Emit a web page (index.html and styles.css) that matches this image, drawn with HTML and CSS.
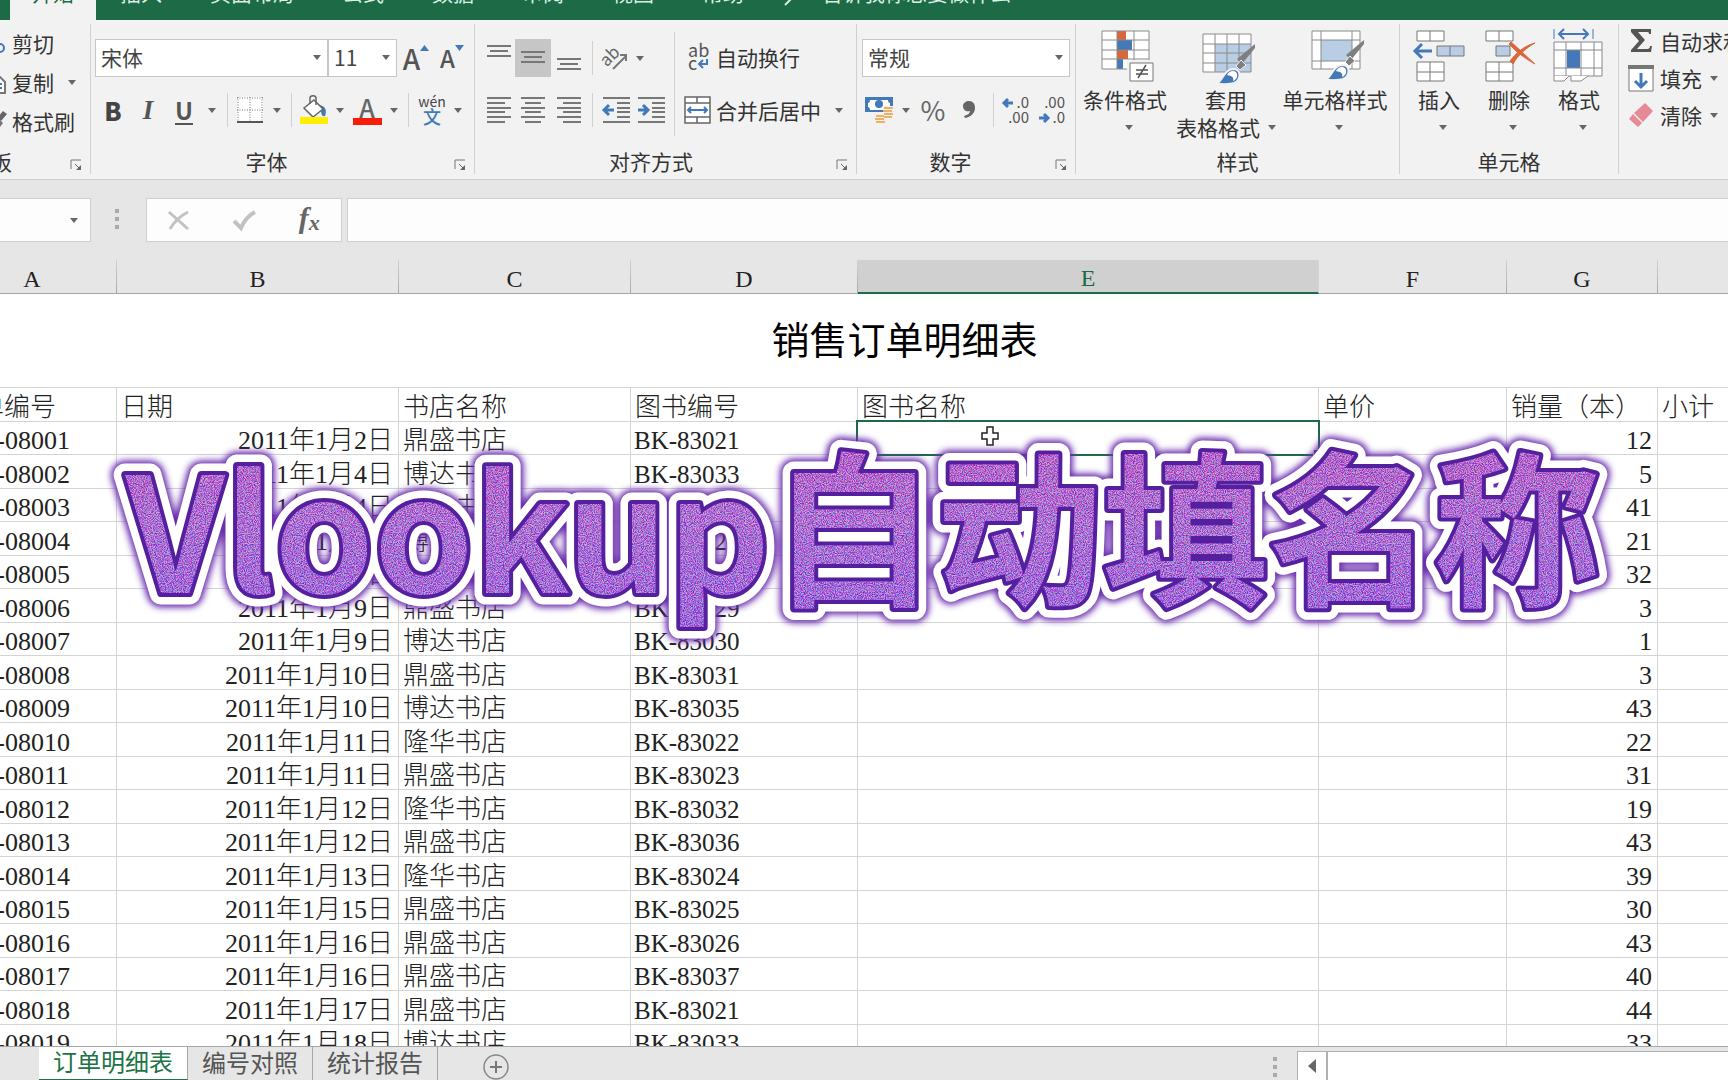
FILE: index.html
```html
<!DOCTYPE html>
<html lang="zh-CN">
<head>
<meta charset="utf-8">
<title>销售订单明细表</title>
<link rel="stylesheet" href="styles.css">
</head>
<body>
<svg class="defs" aria-hidden="true">
  <defs>
    <g id="brush">
      <path d="M50 15 L37 31 L32 26 L50 11 Z" fill="#7f7f7f"/>
      <path d="M36 27 l-5 6 4 4 6-5z" fill="#7f7f7f" stroke="#f2f2f2"/>
      <path d="M11 51 C18 49 18 37 28 36 C37 36 36 47 29 50 C24 52 17 51 11 51 Z" fill="#4379b8" stroke="#f2f2f2" stroke-width="2"/>
      <path d="M22 42 C24 38 28 37 31 39 C34 43 31 47 28 48 C29 44 27 43 22 42 Z" fill="#fff"/>
    </g>
    <linearGradient id="bannerFill" x1="0" y1="0" x2="0" y2="1">
      <stop offset="0" stop-color="#c63fc0"/>
      <stop offset="0.5" stop-color="#ac62d8"/>
      <stop offset="1" stop-color="#8f50ea"/>
    </linearGradient>
    <filter id="glitter" x="0" y="0" width="1" height="1" color-interpolation-filters="sRGB">
      <feTurbulence type="fractalNoise" baseFrequency="0.9" numOctaves="2" seed="4" result="n"/>
      <feColorMatrix in="n" type="matrix" values="3 0 0 0 -0.8  0 3.4 0 0 -1.2  0 0 1.6 0 0  0 0 0 0 0.48" result="c"/>
      <feComposite in="c" in2="SourceGraphic" operator="in" result="g"/>
      <feMerge><feMergeNode in="SourceGraphic"/><feMergeNode in="g"/></feMerge>
    </filter>
    <filter id="halo" x="-0.1" y="-0.2" width="1.2" height="1.4"><feGaussianBlur stdDeviation="3"/></filter>
  </defs>
</svg>

<nav class="tabs">
  <button class="tab tab-on">开始</button>
  <button class="tab">插入</button>
  <button class="tab">页面布局</button>
  <button class="tab">公式</button>
  <button class="tab">数据</button>
  <button class="tab">审阅</button>
  <button class="tab">视图</button>
  <button class="tab">帮助</button>
  <button class="tab tell"><svg width="12" height="30" viewBox="0 0 12 30"><path d="M10 21 L3 28" stroke="#d8efe2" stroke-width="2" fill="none"/></svg>告诉我你想要做什么</button>
</nav>

<header class="ribbon">
  <section class="group clipboard">
    <div class="stack">
      <button class="line"><svg width="20" height="24" viewBox="0 0 20 24"><circle cx="13" cy="17" r="4" fill="none" stroke="#4379b8" stroke-width="2"/><path d="M12 14 L6 3" stroke="#666" stroke-width="2"/></svg>剪切</button>
      <button class="line"><svg width="20" height="24" viewBox="0 0 20 24"><path d="M6 7 h7 l5 5 v11 H6z" fill="#fff" stroke="#777" stroke-width="2"/><path d="M9 14h6M9 18h6" stroke="#4379b8" stroke-width="2"/></svg>复制<i class="dd"></i></button>
      <button class="line"><svg width="20" height="24" viewBox="0 0 20 24"><path d="M10 9 L16 2 L20 5 L14 12z" fill="#666"/><path d="M10 8 l6 6-3 4-6-5z" fill="#777"/></svg>格式刷</button>
    </div>
    <footer class="caption">剪贴板<svg class="launch" viewBox="0 0 12 12"><path d="M1 10V1h10" fill="none" stroke="#777"/><path d="M5 5l5 5" stroke="#666"/><path d="M11 6v5H6z" fill="#666"/></svg></footer>
  </section>

  <section class="group font">
    <div class="tools row-a">
      <label class="combo"><select aria-label="字体"><option>宋体</option></select></label>
      <label class="combo"><select aria-label="字号"><option>11</option></select></label>
      <button class="grow" aria-label="增大字号"><span>A</span><svg width="9" height="6" viewBox="0 0 9 6"><path d="M0 6h9L4.500 0z" fill="#4379b8"/></svg></button>
      <button class="shrink" aria-label="减小字号"><span>A</span><svg width="9" height="6" viewBox="0 0 9 6"><path d="M0 0h9L4.500 6z" fill="#4379b8"/></svg></button>
    </div>
    <div class="tools row-b">
      <button class="bold">B</button>
      <button class="italic">I</button>
      <button class="under">U</button><i class="dd"></i>
      <i class="sep"></i>
      <button aria-label="边框"><svg width="26" height="26" viewBox="0 0 26 26"><path d="M0 0h26v26H0z" fill="#fff"/><path d="M1 0V24M25 0V24M13 0V24M0 1H26M0 13H26" stroke="#777" stroke-dasharray="1 1.500" fill="none"/><path d="M0 25H26" stroke="#555" stroke-width="2"/></svg></button><i class="dd"></i>
      <i class="sep"></i>
      <button aria-label="填充颜色"><svg width="30" height="30" viewBox="0 0 30 30"><path d="M20 10 C27 11 28 16 26 21 C23 22 22 19 22 14z" fill="#4379b8"/><path d="M15 5 L24 14 L14 22 L5 13 Z" fill="#fff" stroke="#666" stroke-width="1.500"/><path d="M11 9V3c0-3 6-3 6 0v7" fill="none" stroke="#666" stroke-width="1.500"/><path d="M1 22h28v7H1z" fill="#ffee00"/></svg></button><i class="dd"></i>
      <button class="ink" aria-label="字体颜色"><span>A</span></button><i class="dd"></i>
      <i class="sep"></i>
      <button class="pinyin"><span>wén</span><b>文</b></button><i class="dd"></i>
    </div>
    <footer class="caption">字体<svg class="launch" viewBox="0 0 12 12"><path d="M1 10V1h10" fill="none" stroke="#777"/><path d="M5 5l5 5" stroke="#666"/><path d="M11 6v5H6z" fill="#666"/></svg></footer>
  </section>

  <section class="group align">
    <div class="split">
      <div class="half">
        <div class="tools row-a">
          <button aria-label="顶端对齐"><svg class="bars" viewBox="0 0 24 26"><path d="M0 1h24M3 6h18M0 11h24"/></svg></button>
          <button class="pressed" aria-label="垂直居中"><svg class="bars" viewBox="0 0 24 26"><path d="M0 7h24M3 12h18M0 17h24"/></svg></button>
          <button aria-label="底端对齐"><svg class="bars" viewBox="0 0 24 26"><path d="M0 14h24M3 19h18M0 24h24"/></svg></button>
          <i class="sep"></i>
          <button aria-label="方向"><svg width="26" height="26" viewBox="0 0 26 26"><text x="-1" y="17" class="orient" transform="rotate(-45 8 14)">ab</text><path d="M10 24 L23 11M17 10h6v6" fill="none" stroke="#777" stroke-width="2"/></svg></button><i class="dd"></i>
        </div>
        <div class="tools row-b">
          <button aria-label="左对齐"><svg class="bars" viewBox="0 0 24 26"><path d="M0 1h24M0 6h18M0 11h24M0 15h18M0 20h24M0 25h18"/></svg></button>
          <button aria-label="居中"><svg class="bars" viewBox="0 0 24 26"><path d="M0 1h24M4 6h16M0 11h24M4 15h16M0 20h24M4 25h16"/></svg></button>
          <button aria-label="右对齐"><svg class="bars" viewBox="0 0 24 26"><path d="M0 1h24M6 6h18M0 11h24M6 15h18M0 20h24M6 25h18"/></svg></button>
          <i class="sep"></i>
          <button aria-label="减少缩进"><svg class="bars wide" viewBox="0 0 27 26"><path d="M0 1h27M14 6h13M14 11h13M14 15h13M14 20h13M0 25h27"/><path class="arrow" d="M11 13H2M6 8l-5 5 5 5"/></svg></button>
          <button aria-label="增加缩进"><svg class="bars wide" viewBox="0 0 27 26"><path d="M0 1h27M14 6h13M14 11h13M14 15h13M14 20h13M0 25h27"/><path class="arrow" d="M0 13h9M5 8l5 5-5 5"/></svg></button>
        </div>
      </div>
      <div class="wraps">
        <button class="line wrap"><svg width="27" height="28" viewBox="0 0 27 28"><text x="4" y="14" class="abc">ab</text><text x="4" y="27" class="abc">c</text><path d="M23 16v5h-7M19 17l-4 4 4 4" fill="none" stroke="#4379b8" stroke-width="2"/></svg>自动换行</button>
        <button class="line merge"><svg width="27" height="28" viewBox="0 0 27 28"><path d="M1 1h25v26H1zM1 7h25M1 21h25M13 1v6M13 21v6" fill="#fff" stroke="#666" stroke-width="1.500"/><path d="M4 14h19M7 11l-3 3 3 3M20 11l3 3-3 3" fill="none" stroke="#4379b8" stroke-width="2"/></svg>合并后居中<i class="dd"></i></button>
      </div>
    </div>
    <footer class="caption">对齐方式<svg class="launch" viewBox="0 0 12 12"><path d="M1 10V1h10" fill="none" stroke="#777"/><path d="M5 5l5 5" stroke="#666"/><path d="M11 6v5H6z" fill="#666"/></svg></footer>
  </section>

  <section class="group number">
    <div class="tools row-a">
      <label class="combo"><select aria-label="数字格式"><option>常规</option></select></label>
    </div>
    <div class="tools row-b">
      <button aria-label="会计数字格式"><svg width="28" height="28" viewBox="0 0 28 28"><path d="M0 1h28v15H0z" fill="#4379b8"/><path d="M5 4h18c0 2 1 3 2 3v4c-1 0-2 1-2 3H5c0-2-1-3-2-3V7c1 0 2-1 2-3z" fill="#fff"/><circle cx="14" cy="8" r="4" fill="#4379b8"/><path d="M18 10h10v12h-8v6H10v-9h8z" fill="#f2f2f2"/><path d="M19 12h9M18 15h9M19 18h9M19 21h8M11 20h8M10 23h9M11 26h9" stroke="#f0b064" stroke-width="2"/></svg></button><i class="dd"></i>
      <button class="percent">%</button>
      <button aria-label="千位分隔样式"><svg width="12" height="18" viewBox="0 0 12 18"><path d="M6 0c4 0 6 3 6 7 0 5-4 9-10 10l-1-2c4-1 6-3 6-5-4 1-7-1-7-5 0-3 3-5 6-5z" fill="#666"/></svg></button>
      <i class="sep"></i>
      <button aria-label="增加小数位数"><svg width="28" height="28" viewBox="0 0 28 28"><text x="27" y="12" text-anchor="end" class="dec">.0</text><text x="27" y="27" text-anchor="end" class="dec">.00</text><path d="M11 7H3M6 3L2 7l4 4" fill="none" stroke="#4379b8" stroke-width="3"/></svg></button>
      <button aria-label="减少小数位数"><svg width="28" height="28" viewBox="0 0 28 28"><text x="27" y="12" text-anchor="end" class="dec">.00</text><text x="27" y="27" text-anchor="end" class="dec">.0</text><path d="M1 22h8M6 18l4 4-4 4" fill="none" stroke="#4379b8" stroke-width="3"/></svg></button>
    </div>
    <footer class="caption">数字<svg class="launch" viewBox="0 0 12 12"><path d="M1 10V1h10" fill="none" stroke="#777"/><path d="M5 5l5 5" stroke="#666"/><path d="M11 6v5H6z" fill="#666"/></svg></footer>
  </section>

  <section class="group styles">
    <div class="bigs">
      <button class="big"><svg width="54" height="56" viewBox="0 0 54 56"><path d="M4 3h47v38H4z" fill="#fff"/><path d="M19 3h9v9h-9zM19 22h11v9H19z" fill="#d9673c"/><path d="M19 12h15v10H19zM19 31h6v10h-6z" fill="#4379b8"/><path d="M4 3h47v38H4zM4 12h47M4 22h47M4 31h47M19 3v38M36 3v38" fill="none" stroke="#8a8a8a"/><path d="M29 32h28v22H29z" fill="#f2f2f2"/><path d="M32 35h23v18H32z" fill="#fff" stroke="#777"/><path d="M38 42h12M38 46h12M48 37l-8 13" stroke="#555" stroke-width="1.500"/></svg><span>条件格式</span><i class="dd"></i></button>
      <button class="big"><svg width="54" height="56" viewBox="0 0 54 56"><path d="M4 6h48v38H4z" fill="#fff"/><path d="M16 16h36v28H16z" fill="#b9cde5"/><path d="M4 6h48v38H4zM4 16h48M4 25h48M4 35h48M16 6v38M28 6v38M40 6v38" fill="none" stroke="#8a8a8a"/><use href="#brush" x="6" y="5"/></svg><span>套用</span><span class="tail">表格格式<i class="dd"></i></span></button>
      <button class="big"><svg width="54" height="56" viewBox="0 0 54 56"><path d="M4 3h48v38H4z" fill="#fff" stroke="#8a8a8a"/><path d="M13 12h31v21H13z" fill="#b9cde5"/><path d="M4 12h48M4 33h48M13 3v38M44 3v38" fill="none" stroke="#8a8a8a"/><use href="#brush" x="6" y="1"/></svg><span>单元格样式</span><i class="dd"></i></button>
    </div>
    <footer class="caption">样式</footer>
  </section>

  <section class="group cells">
    <div class="bigs">
      <button class="big"><svg width="54" height="56" viewBox="0 0 54 56"><path d="M5 3h27v10H5zM18 3v10M5 34h27v19H5zM18 34v19M5 44h27" fill="#fff" stroke="#777"/><path d="M25 18h27v10H25zM38 18v10" fill="#b9cde5" stroke="#777"/><path d="M20 23H4M10 16l-7 7 7 7" fill="none" stroke="#4379b8" stroke-width="3"/></svg><span>插入</span><i class="dd"></i></button>
      <button class="big"><svg width="54" height="56" viewBox="0 0 54 56"><path d="M4 3h27v10H4zM17 3v10M4 34h27v19H4zM17 34v19M4 44h27" fill="#fff" stroke="#777"/><path d="M14 18h14v10H14z" fill="#b9cde5" stroke="#777"/><path d="M29 14 C36 20 44 28 53 36 C44 31 34 24 27 16z" fill="#d9673c" stroke="#d9673c"/><path d="M53 15 C44 20 36 27 31 36 L28 33 C34 25 42 18 53 15z" fill="#d9673c" stroke="#d9673c"/></svg><span>删除</span><i class="dd"></i></button>
      <button class="big"><svg width="54" height="56" viewBox="0 0 54 56"><path d="M2 1v10M41 1v10" stroke="#4379b8"/><path d="M7 6h29M12 1L7 6l5 5M31 1l5 5-5 5" fill="none" stroke="#4379b8" stroke-width="2"/><path d="M2 14h48v34H2z" fill="#fff"/><path d="M15 22h13v18H15z" fill="#4379b8"/><path d="M2 14h48v34H2zM2 22h48M2 40h48M14 14v34M29 14v34M42 14v34" fill="none" stroke="#888"/><path d="M2 48v5h10l5-5M19 48v5h10l7-5" fill="#fff" stroke="#888"/></svg><span>格式</span><i class="dd"></i></button>
    </div>
    <footer class="caption">单元格</footer>
  </section>

  <section class="group edit">
    <div class="stack">
      <button class="line"><svg width="28" height="28" viewBox="0 0 28 28"><path d="M4 2h20v5h-2c0-2-1-2-3-2h-8l7 8-8 9h10c2 0 3-1 3-3h2l-1 6H4v-2l8-9-8-9z" fill="#555"/></svg>自动求和</button>
      <button class="line"><svg width="28" height="28" viewBox="0 0 28 28"><path d="M2 2h24v25H2z" fill="#fff" stroke="#777"/><path d="M1 1h26v4H1z" fill="#777"/><path d="M14 9v14M8 17l6 6 6-6" fill="none" stroke="#4379b8" stroke-width="3"/></svg>填充<i class="dd"></i></button>
      <button class="line"><svg width="28" height="28" viewBox="0 0 28 28"><path d="M18 2l8 8-10 11-9-9z" fill="#e68a96"/><path d="M6 13l9 9-4 4-9-8z" fill="#e68a96"/></svg>清除<i class="dd"></i></button>
    </div>
  </section>
</header>

<div class="formula">
  <label class="namebox"><input type="text" aria-label="名称框"><i class="dd"></i></label>
  <i class="grip"></i>
  <div class="fxbox">
    <button aria-label="取消"><svg width="22" height="20" viewBox="0 0 22 20"><path d="M1 2L20 19M20 2C12 6 6 12 2 19" fill="none" stroke="#c2c2c2" stroke-width="3"/></svg></button>
    <button aria-label="输入"><svg width="24" height="20" viewBox="0 0 24 20"><path d="M2 11l7 7C12 11 17 5 23 2" fill="none" stroke="#c2c2c2" stroke-width="4"/></svg></button>
    <button class="fx">f<sub>x</sub></button>
  </div>
  <input class="fxinput" type="text" aria-label="编辑栏">
</div>

<main class="sheet">
  <table class="grid">
    <colgroup><col class="ca"><col class="cb"><col class="cc"><col class="cd"><col class="ce"><col class="cf"><col class="cg"><col class="ch"></colgroup>
    <thead>
      <tr class="letters"><th>A</th><th>B</th><th>C</th><th>D</th><th class="on">E</th><th>F</th><th>G</th><th>H</th></tr>
    </thead>
    <tbody id="rows">
      <tr class="title"><td colspan="8">销售订单明细表</td></tr>
      <tr class="heads"><td>订单编号</td><td>日期</td><td>书店名称</td><td>图书编号</td><td>图书名称</td><td>单价</td><td>销量（本）</td><td>小计</td></tr>
    </tbody>
  </table>
  <svg class="cursor" width="18" height="20" viewBox="0 0 18 20"><path d="M6 1h6v6h5v6h-5v6H6v-6H1V7h5z" fill="#fff" stroke="#222" stroke-width="1.500"/></svg>
  <svg class="banner" aria-label="Vlookup自动填名称">
    <defs><text id="bannerText" x="126" y="333"><tspan class="b-latin">Vlookup</tspan>自动填名称</text></defs>
    <use href="#bannerText" class="b-glow" filter="url(#halo)"/>
    <use href="#bannerText" class="b-white"/>
    <use href="#bannerText" class="b-edge"/>
    <use href="#bannerText" class="b-fill" filter="url(#glitter)"/>
  </svg>
</main>

<footer class="bottom">
  <div class="sheets">
    <button class="sh sh-on">订单明细表</button>
    <button class="sh">编号对照</button>
    <button class="sh">统计报告</button>
    <button class="add" aria-label="新工作表"><svg width="26" height="26" viewBox="0 0 26 26"><circle cx="13" cy="13" r="12" fill="none" stroke="#888" stroke-width="1.500"/><path d="M7 13h12M13 7v12" stroke="#777" stroke-width="2"/></svg></button>
  </div>
  <i class="grip"></i>
  <div class="scroll">
    <button aria-label="向左滚动"><svg width="8" height="14" viewBox="0 0 8 14"><path d="M8 0v14L0 7z" fill="#666"/></svg></button>
    <div class="track"></div>
  </div>
</footer>
<script src="rows.js"></script>
</body>
</html>
```
FILE: rows.js
```js
const orders = [
  ["1月2日", "鼎盛", 83021, 12], ["1月4日", "博达", 83033, 5], ["1月4日", "博达", 83034, 41],
  ["1月5日", "博达", 83027, 21], ["1月6日", "鼎盛", 83028, 32], ["1月9日", "鼎盛", 83029, 3],
  ["1月9日", "博达", 83030, 1], ["1月10日", "鼎盛", 83031, 3], ["1月10日", "博达", 83035, 43],
  ["1月11日", "隆华", 83022, 22], ["1月11日", "鼎盛", 83023, 31], ["1月12日", "隆华", 83032, 19],
  ["1月12日", "鼎盛", 83036, 43], ["1月13日", "隆华", 83024, 39], ["1月15日", "鼎盛", 83025, 30],
  ["1月16日", "鼎盛", 83026, 43], ["1月16日", "鼎盛", 83037, 40], ["1月17日", "鼎盛", 83021, 44],
  ["1月18日", "博达", 83033, 33]
];
const body = document.getElementById("rows");
orders.forEach(([day, shop, code, count], i) => {
  const tr = document.createElement("tr");
  tr.className = "order";
  const id = "BTW-" + String(8001 + i).padStart(5, "0");
  [id, "2011年" + day, shop + "书店", "BK-" + code, "", "", count, ""].forEach((text, c) => {
    const td = document.createElement("td");
    td.textContent = text;
    if (i === 0 && c === 4) td.className = "selected";
    tr.append(td);
  });
  body.append(tr);
});
```
FILE: styles.css
```css
* { box-sizing: border-box; }
body {
  margin: 0;
  height: 100vh;
  overflow: hidden;
  display: flex;
  flex-direction: column;
  background: #e6e6e6;
  color: #333;
  font-family: "Noto Sans CJK SC", sans-serif;
  font-size: 21px;
  line-height: 26px;
}
button {
  font: inherit;
  color: inherit;
  background: none;
  border: 0;
  padding: 0;
  white-space: nowrap;
}
svg { display: block; flex: none; overflow: visible; }
.defs { position: absolute; width: 0; height: 0; }

/* small drop-down arrow */
.dd {
  display: block;
  flex: none;
  border: 4px solid transparent;
  border-top: 5px solid #666;
  border-bottom: 0;
}

/* tab strip */
.tabs {
  display: flex;
  align-items: flex-end;
  height: 20px;
  padding-left: 10px;
  background: #1c6a46;
  color: #d8efe2;
  overflow: hidden;
  flex: none;
}
.tab { flex: none; height: 56px; padding: 0 24px; }
.tab-on { background: #f2f2f2; color: #1c6a46; padding: 0 22px; }
.tell { display: flex; align-items: center; gap: 28px; padding: 0 14px; }

/* ribbon */
.ribbon {
  display: flex;
  flex: none;
  height: 160px;
  padding: 4px 0 5px;
  background: #f2f2f2;
  border-bottom: 1px solid #cfcfcf;
  overflow: hidden;
}
.group {
  flex: none;
  display: flex;
  flex-direction: column;
  border-right: 1px solid #d0d0d0;
}
.clipboard { width: 91px; }
.font { width: 384px; padding-left: 4px; }
.align { width: 382px; padding-left: 7px; }
.number { width: 219px; padding-left: 5px; }
.styles { width: 324px; }
.cells { width: 219px; }
.edit { flex: 1 0 110px; border-right: 0; }

.caption {
  position: relative;
  margin-top: auto;
  height: 26px;
  text-align: center;
  white-space: nowrap;
}
.font .caption, .align .caption, .number .caption { padding-right: 36px; }
.clipboard .caption { margin-left: -51px; text-align: left; }
.launch { position: absolute; right: 8px; bottom: 3px; width: 12px; height: 12px; }

.tools {
  display: grid;
  align-items: center;
  justify-items: center;
}
.row-a { height: 38px; margin-top: 15px; }
.row-b { height: 34px; margin-top: 16px; }
.sep { width: 1px; height: 34px; background: #d0d0d0; }
.font .row-a { grid-template-columns: 233px 69px 38px 34px; }
.font .row-b { grid-template-columns: 36px 34px 38px 18px 12px 34px 20px 8px 38px 14px 40px 14px 14px 34px 18px; }
.align .row-a { grid-template-columns: 33px 36px 36px 10px 38px 10px; }
.align .row-b { grid-template-columns: 33px 36px 36px 10px 38px 32px; }
.number .row-a { grid-template-columns: 208px; }
.number .row-b { grid-template-columns: 34px 20px 34px 38px 10px 36px 36px; }

.combo { position: relative; width: 100%; height: 38px; }
.combo select {
  appearance: none;
  width: 100%;
  height: 38px;
  padding: 0 5px 2px;
  border: 1px solid #c6c6c6;
  border-radius: 0;
  background: #fff;
  color: #444;
  font: inherit;
}
.combo::after {
  content: "";
  position: absolute;
  right: 7px;
  top: 16px;
  border: 4px solid transparent;
  border-top: 5px solid #666;
  border-bottom: 0;
}
.grow, .shrink { display: flex; color: #555; font-weight: 500; }
.grow { font-size: 28px; }
.shrink { font-size: 24px; }
.bold { font-weight: 900; font-size: 25px; color: #444; }
.italic { font: italic bold 27px/34px "Liberation Serif", serif; color: #555; }
.under { font-weight: 700; font-size: 24px; color: #555; text-decoration: underline; text-decoration-thickness: 2px; text-underline-offset: 3px; }
.ink { width: 29px; height: 30px; border-bottom: 7px solid #f81d08; color: #666; font-size: 25px; font-weight: 500; line-height: 22px; }
.pinyin { display: flex; flex-direction: column; align-items: center; font-size: 14px; line-height: 13px; color: #444; }
.pinyin b { font-size: 18px; line-height: 17px; font-weight: 500; color: #4379b8; }
.percent { font-size: 27px; color: #666; }
.pressed { background: #c6c6c6; width: 36px; height: 38px; display: grid; place-items: center; }
.bars { width: 24px; height: 26px; fill: none; stroke: #777; stroke-width: 2; }
.wide { width: 27px; }
.bars .arrow { stroke: #4379b8; stroke-width: 3; }
.orient { font-size: 17px; fill: #666; }
.abc { font-size: 18px; fill: #555; }
.dec { font-size: 15px; fill: #555; }

.split { display: flex; }
.half { flex: none; width: 192px; }
.wraps { flex: 1; min-width: 0; border-left: 1px solid #d0d0d0; margin-top: 8px; height: 104px; padding: 11px 0 0 9px; }
.line { display: flex; align-items: center; gap: 5px; height: 28px; }
.wraps .merge { margin-top: 25px; }
.merge .dd { margin-left: 9px; }

.stack { display: flex; flex-direction: column; }
.clipboard .stack { gap: 11px; padding-top: 5px; margin-left: -13px; }
.clipboard .dd { margin-left: 9px; }
.edit .stack { gap: 9px; padding: 3px 0 0 8px; }
.edit .dd { margin-left: 3px; }

.bigs { display: flex; padding-top: 4px; }
.cells .bigs { padding-left: 4px; }
.big { width: 70px; display: flex; flex-direction: column; align-items: center; }
.big svg { margin-bottom: 2px; }
.big > .dd { margin: 13px -8px 0 0; }
.styles .big { width: 98px; }
.styles .big:nth-child(2) { width: 104px; }
.styles .big:nth-child(3) { width: 114px; }
.tail { display: flex; align-items: center; gap: 8px; margin-top: 2px; }

/* formula bar */
.formula { display: flex; flex: none; height: 80px; padding: 18px 0; }
.namebox {
  display: flex;
  align-items: center;
  width: 91px;
  height: 44px;
  padding-right: 12px;
  background: #fdfdfd;
  border: 1px solid #cfcfcf;
  border-left: 0;
}
.namebox input { flex: 1; min-width: 0; border: 0; background: none; font: inherit; }
.grip {
  width: 4px;
  height: 20px;
  background: repeating-linear-gradient(#aaa 0 4px, transparent 4px 8px);
}
.formula .grip { margin: 11px 24px 0; }
.fxbox {
  display: flex;
  align-items: center;
  justify-content: space-around;
  width: 196px;
  height: 44px;
  margin: 0 5px 0 3px;
  background: #fdfdfd;
  border: 1px solid #cfcfcf;
}
.fx { font: italic bold 30px/32px "Liberation Serif", serif; color: #666; padding-bottom: 4px; }
.fx sub { font-size: 22px; line-height: 10px; vertical-align: -2px; }
.fxinput { flex: 1; height: 44px; background: #fdfdfd; border: 1px solid #cfcfcf; border-right: 0; font: inherit; }

/* worksheet */
.sheet { position: relative; flex: 1; min-height: 0; overflow: hidden; background: #fff; }
.grid {
  table-layout: fixed;
  width: 1914px;
  margin-left: -52px;
  border-collapse: separate;
  border-spacing: 0;
  color: #222;
  font-family: "Liberation Serif", "Noto Sans CJK SC", serif;
  font-size: 26px;
  line-height: 26px;
  font-weight: 300;
}
.ca { width: 169px; } .cb { width: 282px; } .cc { width: 232px; } .cd { width: 227px; }
.ce { width: 461px; } .cf { width: 188px; } .cg { width: 151px; } .ch { width: 204px; }
.grid th, .grid td { padding: 6px 5px 0 4px; border: solid #d4d4d4; border-width: 0 1px 1px 0; white-space: nowrap; text-align: left; }
.grid .letters th {
  height: 34px;
  padding: 4px 5px 0;
  background: #e6e6e6;
  border-image: linear-gradient(#d4d4d4, #a6a6a6) 1;
  text-align: center;
  font-size: 24px;
  font-weight: 400;
}
.grid .letters .on { background: #d0d0d0; color: #1c6a46; border-image: none; border-bottom: 2px solid #1c6a46; }
.grid .title td { height: 94px; padding: 0; text-align: center; font-size: 38px; line-height: 48px; font-weight: 400; color: #000; }
.heads td { height: 34px; }
.order td { height: 34px; }
.order:nth-child(odd) td { height: 33px; }
.grid .order td:nth-child(1) { padding-left: 0; text-indent: -8px; }
.grid .order td:nth-child(2), .grid .order td:nth-child(7) { text-align: right; }
.grid .order td:nth-child(4) { font-size: 25px; padding-left: 3px; }
.order .selected { position: relative; }
.selected::before { content: ""; position: absolute; inset: -2px; border: 2px solid #1c6a46; }
.selected::after { content: ""; position: absolute; right: -3px; bottom: -3px; width: 7px; height: 7px; background: #1c6a46; outline: 1px solid #fff; }
.cursor { position: absolute; left: 981px; top: 166px; }

/* caption artwork over the sheet */
.banner {
  position: absolute;
  inset: 0;
  width: 100%;
  height: 100%;
  font: bold 166px "Noto Sans CJK SC", sans-serif;
  stroke-linejoin: round;
  pointer-events: none;
}
.b-latin { font-size: 159px; }
.b-glow { fill: #6a2fae; stroke: #6a2fae; stroke-width: 29px; }
.b-white { fill: #fff; stroke: #fff; stroke-width: 23px; }
.b-fill { fill: url(#bannerFill); }
.b-edge { fill: #55209f; stroke: #55209f; stroke-width: 8px; }

/* sheet tabs */
.bottom { display: flex; flex: none; height: 34px; border-top: 1px solid #a6a6a6; color: #555; }
.sheets { flex: 1; display: flex; padding-left: 39px; font-size: 24px; }
.sh { height: 33px; padding: 0 14px 4px; line-height: 28px; border-right: 1px solid #a6a6a6; margin: 0; }
.sh-on { background: #fff; color: #217346; border-bottom: 1px solid #217346; }
.add { margin: 7px 0 0 45px; height: 26px; }
.bottom .grip { margin: 10px 20px 0 0; }
.scroll { width: 431px; height: 30px; margin-top: 4px; display: flex; border: 1px solid #b0b0b0; border-right: 0; background: #fff; }
.scroll button { width: 30px; display: grid; place-items: center; border-right: 2px solid #b0b0b0; }
.track { flex: 1; }
```
